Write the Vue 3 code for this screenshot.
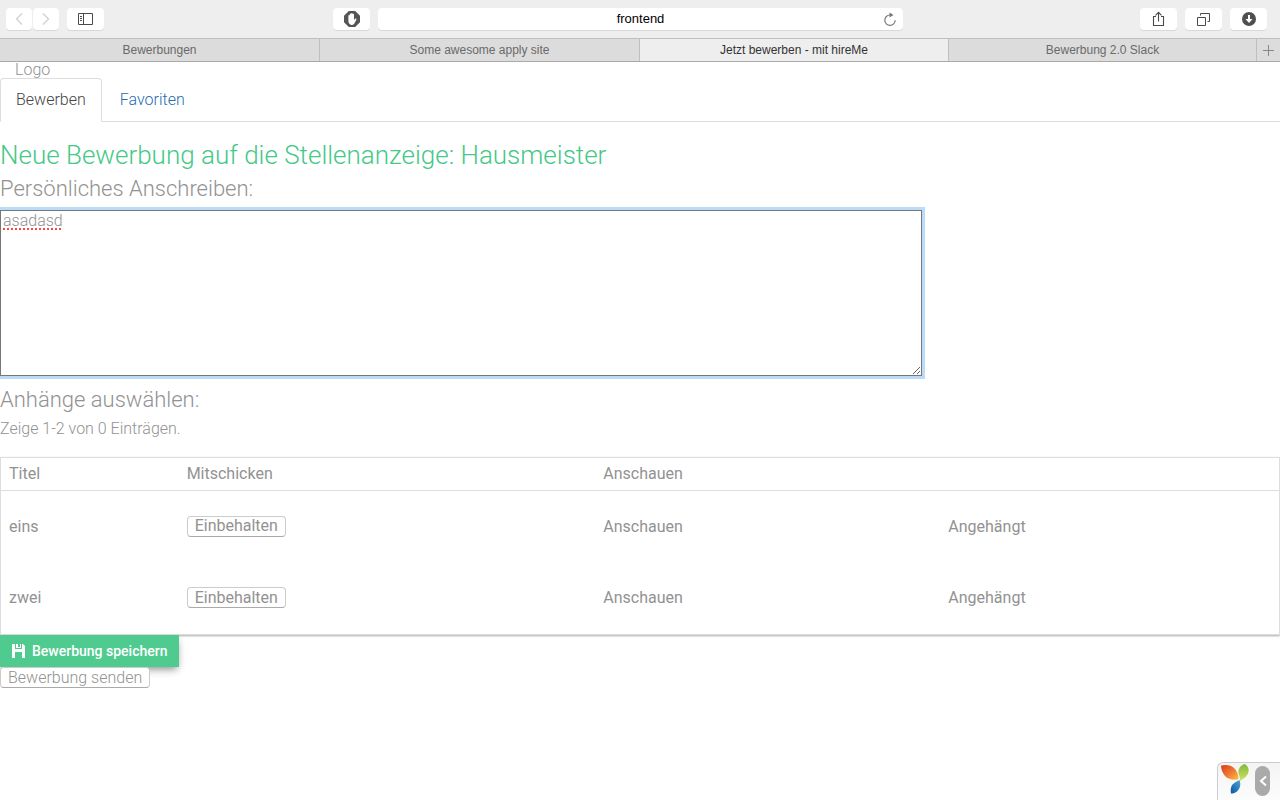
<script setup>
import { ref } from 'vue'

const tabs = [
  { title: 'Bewerbungen' },
  { title: 'Some awesome apply site' },
  { title: 'Jetzt bewerben - mit hireMe', active: true },
  { title: 'Bewerbung 2.0 Slack' },
]
const address = ref('frontend')
const letter = ref('asadasd')
const attachments = ['eins', 'zwei']
</script>

<template>
  <div class="window">
    <header class="toolbar">
      <div class="group left">
        <button class="tool narrow" aria-label="Zurück">
          <svg width="8" height="14" viewBox="0 0 8 14"><path d="M7 1.5L1.5 7L7 12.5" fill="none" stroke="#d2d2d2" stroke-width="1.4" /></svg>
        </button>
        <button class="tool narrow" aria-label="Vorwärts">
          <svg width="8" height="14" viewBox="0 0 8 14"><path d="M1 1.5L6.5 7L1 12.5" fill="none" stroke="#d2d2d2" stroke-width="1.4" /></svg>
        </button>
        <button class="tool sidebar" aria-label="Seitenleiste">
          <svg width="15" height="12" viewBox="0 0 15 12"><path d="M.5.5h14v11H.5zM5.5.5v11M2 3.5h2M2 5.5h2M2 7.5h2" fill="none" stroke="#4a4a4a" /></svg>
        </button>
      </div>
      <div class="group middle">
        <button class="tool" aria-label="Werbeblocker">
          <svg width="16" height="16" viewBox="0 0 16 16">
            <path d="M4.8 0h6.4L16 4.8v6.4L11.2 16H4.8L0 11.2V4.8z" fill="#555" />
            <path d="M4.4 8V4.6q0-.7.7-.7t.7.7V7V3.2q0-.7.7-.7t.7.7V7V2.6q0-.7.7-.7t.7.7V7V3.4q0-.7.7-.7t.7.7v5.8l1-1.4q.6-.7 1.2-.2t.1 1.2l-1.9 3.7q-.8 1.4-2.3 1.400H7.500q-1.500 0-2.300-1.400Q4.400 11.500 4.400 10z" fill="#fff" />
          </svg>
        </button>
        <div class="address">
          <input v-model="address" type="text" aria-label="Adresse" />
          <button class="reload" aria-label="Neu laden">
            <svg width="14" height="15" viewBox="0 0 14 15"><path d="M7 3A5.200 5.200 0 1 0 12.200 8.200" fill="none" stroke="#777" stroke-width="1.200" /><path d="M6.500.5L10.500 3L6.500 5.500z" fill="#777" /></svg>
          </button>
        </div>
      </div>
      <div class="group right">
        <button class="tool" aria-label="Teilen">
          <svg width="13" height="16" viewBox="0 0 13 16"><path d="M4 5.500H1.500v9h10v-9H9M6.500 10.500V1.500M3.500 4.300L6.500 1.300L9.500 4.300" fill="none" stroke="#4a4a4a" stroke-width="1.100" /></svg>
        </button>
        <button class="tool" aria-label="Alle Tabs">
          <svg width="13" height="13" viewBox="0 0 13 13"><path d="M.5 4.500h8v8h-8zM3.500 2.500V.5h9v8h-2" fill="none" stroke="#4a4a4a" /></svg>
        </button>
        <button class="tool" aria-label="Downloads">
          <svg width="14" height="14" viewBox="0 0 14 14"><circle cx="7" cy="7" r="7" fill="#4f4f4f" /><path d="M6 3h2v4h2.500L7 11L3.500 7H6z" fill="#fff" /></svg>
        </button>
      </div>
    </header>

    <nav class="browser-tabs" aria-label="Browser-Tabs">
      <button v-for="t in tabs" :key="t.title" class="browser-tab" :class="{ active: t.active }">{{ t.title }}</button>
      <button class="browser-tab plus" aria-label="Neuer Tab">
        <svg width="11" height="11" viewBox="0 0 11 11"><path d="M5.500 0v11M0 5.500h11" stroke="#888" /></svg>
      </button>
    </nav>

    <main class="page">
      <div class="logo">Logo</div>
      <nav class="page-tabs">
        <a href="#bewerben" class="active">Bewerben</a>
        <a href="#favoriten">Favoriten</a>
      </nav>

      <h1>Neue Bewerbung auf die Stellenanzeige: Hausmeister</h1>
      <label for="letter" class="heading">Persönliches Anschreiben:</label>
      <textarea id="letter" v-model="letter" spellcheck="false"></textarea>

      <h2 class="heading">Anhänge auswählen:</h2>
      <p class="summary">Zeige 1-2 von 0 Einträgen.</p>

      <table>
        <colgroup>
          <col class="c-title" /><col class="c-send" /><col class="c-view" /><col />
        </colgroup>
        <thead>
          <tr><th>Titel</th><th>Mitschicken</th><th>Anschauen</th><th></th></tr>
        </thead>
        <tbody>
          <tr v-for="a in attachments" :key="a">
            <td>{{ a }}</td>
            <td><button class="plain">Einbehalten</button></td>
            <td>Anschauen</td>
            <td>Angehängt</td>
          </tr>
        </tbody>
      </table>

      <div class="actions">
        <button class="save">
          <svg width="13" height="14" viewBox="0 0 13 14"><path d="M0 0h3v5h7V0h1l2 2v12h-3V8H3v6H0zM4 0h2v4H4zM8 0h1v4H6V3h2z" fill="#fff" /></svg>
          Bewerbung speichern
        </button>
        <button class="plain light">Bewerbung senden</button>
      </div>
    </main>

    <aside class="debug">
      <svg width="30" height="31" viewBox="0 0 30 31">
        <defs>
          <linearGradient id="orange" x1="0" y1="0" x2="1" y2="1"><stop offset="0" stop-color="#d83a20" /><stop offset=".55" stop-color="#f07a35" /><stop offset="1" stop-color="#fbc33c" /></linearGradient>
          <linearGradient id="green" x1="0" y1="0" x2="0" y2="1"><stop offset="0" stop-color="#80b93c" /><stop offset="1" stop-color="#d3e264" /></linearGradient>
          <linearGradient id="blue" x1="1" y1="0" x2="0" y2="1"><stop offset="0" stop-color="#49a6dc" /><stop offset="1" stop-color="#0b569f" /></linearGradient>
        </defs>
        <path d="M1 1.500C7 0 12 1.500 15 5C18 8.500 18.500 12 18.500 15.500C13 16 8 15.500 5 12C2.500 9 1 5 1 1.500z" fill="url(#orange)" />
        <path d="M24.500 0C28.500 2 29.500 6 28 9.500C26.500 13 23.500 14.500 20 17C20 14 19.500 12 18.500 9.500C18 5 20 1.500 24.500 0z" fill="url(#green)" />
        <path d="M19.500 16C21 20 20.500 24 17.500 27C15.500 29 13 29.500 11 29.500C10.500 26 10.500 23 12.500 20.500C14.500 18.500 17 17.500 19.500 16z" fill="url(#blue)" />
      </svg>
      <button class="toggle" aria-label="Debug-Leiste öffnen">
        <svg width="8" height="12" viewBox="0 0 8 12"><path d="M7 1.500L2 6L7 10.500" fill="none" stroke="#fff" stroke-width="2" /></svg>
      </button>
    </aside>
  </div>
</template>

<style>
body {
  margin: 0;
  background: #fff;
}
</style>

<style scoped>
* {
  box-sizing: border-box;
}
.window {
  min-height: 100vh;
  color: #929292;
  font: 300 16px/23px Roboto, sans-serif;
}
button {
  font: inherit;
  color: inherit;
  border: 0;
  padding: 0;
}
.toolbar {
  display: flex;
  height: 38px;
  padding: 0 13px 0 6px;
  align-items: center;
  background: #eee;
}
.group {
  display: flex;
  gap: 8px;
  min-width: 0;
}
.left {
  flex: 327 1 0;
  gap: 1px;
}
.middle {
  flex: 570 1 0;
}
.right {
  flex: 364 1 0;
  justify-content: flex-end;
}
.tool {
  display: flex;
  width: 37px;
  height: 22px;
  flex: none;
  align-items: center;
  justify-content: center;
  background: #fff;
  border-radius: 4px;
  box-shadow: 0 1px 0 #d8d8d8;
}
.narrow {
  width: 26px;
}
.sidebar {
  margin-left: 7px;
}
.address {
  display: flex;
  flex: 1;
  height: 22px;
  padding-right: 6px;
  align-items: center;
  background: #fff;
  border-radius: 4px;
  box-shadow: 0 1px 0 #d8d8d8;
}
.address input {
  flex: 1;
  min-width: 0;
  padding: 0 0 0 20px;
  border: 0;
  outline: 0;
  background: none;
  color: #000;
  font: 13px/20px "Liberation Sans", Arial, sans-serif;
  text-align: center;
}
.reload {
  display: flex;
  background: none;
}
.browser-tabs {
  display: grid;
  grid-template-columns: 320fr 320fr 309fr 308fr 23px;
  height: 24px;
  border-top: 1px solid #bfbfbf;
  border-bottom: 1px solid #aaa;
}
.browser-tab {
  background: #dcdcdc;
  border-right: 1px solid #bfbfbf;
  color: #6a6a6a;
  font: 12px/20px "Liberation Sans", Arial, sans-serif;
}
.browser-tab.active {
  background: #eee;
  color: #333;
}
.plus {
  display: flex;
  align-items: center;
  justify-content: center;
  border-right: 0;
}
.logo {
  padding-left: 15px;
  line-height: 16px;
}
.page-tabs {
  display: flex;
  gap: 2px;
  border-bottom: 1px solid #ddd;
}
.page-tabs a {
  margin-bottom: -1px;
  padding: 9px 15px 10px;
  border: 1px solid transparent;
  border-radius: 4px 4px 0 0;
  color: #1f6cb0;
  text-decoration: none;
}
.page-tabs .active {
  background: #fff;
  border-color: #ddd #ddd #fff;
  color: #444;
}
h1 {
  margin: 16px 0 1px;
  color: #45c888;
  font-size: 26px;
  font-weight: 300;
  line-height: 34px;
}
.heading {
  display: block;
  margin: 0;
  font-size: 22px;
  font-weight: 300;
  line-height: 32px;
}
textarea {
  display: block;
  width: 72%;
  height: 166px;
  margin: 5px 0 8px;
  padding: 0 2px;
  border: 1px solid #777;
  border-radius: 0;
  outline: 3px solid #bbdcf8;
  color: inherit;
  font: inherit;
  line-height: 20px;
  text-decoration: underline dotted #f44 2px;
  text-underline-offset: 2px;
}
.summary {
  margin: 1px 0 17px;
}
table {
  width: 100%;
  table-layout: fixed;
  border-collapse: separate;
  border-spacing: 0;
  border: 1px solid #ddd;
  box-shadow: 0 1px 2px #aaa;
  font-weight: 400;
}
.c-title {
  width: 13.9%;
}
.c-send {
  width: 32.6%;
}
.c-view {
  width: 27%;
}
th,
td {
  padding: 0 8px 2px;
  text-align: left;
  font-weight: 400;
}
th {
  height: 33px;
  border-bottom: 1px solid #ddd;
}
td {
  height: 72px;
}
tbody tr:last-child td {
  height: 71px;
}
.plain {
  display: block;
  height: 21px;
  padding: 0 7px;
  background: #fff;
  border: 1px solid #ccc;
  border-bottom-color: #aaa;
  border-radius: 4px;
  line-height: 18px;
}
.light {
  font-weight: 300;
}
.save {
  display: flex;
  height: 32px;
  padding: 0 11px 0 12px;
  gap: 7px;
  align-items: center;
  position: relative;
  background: #4fcb8f;
  color: #fff;
  font-size: 14px;
  font-weight: 500;
  box-shadow: 0 4px 8px -2px #888;
}
.actions .plain {
  position: relative;
}
.debug {
  position: fixed;
  right: 0;
  bottom: 0;
  display: flex;
  width: 63px;
  height: 38px;
  padding: 1px 0 0 2px;
  gap: 5px;
  background: linear-gradient(#f4f4f4, #fcfcfc);
  border: solid #ccc;
  border-width: 1px 0 0 1px;
  border-radius: 6px 0 0;
}
.toggle {
  display: flex;
  width: 15px;
  height: 30px;
  margin-top: 2px;
  align-items: center;
  justify-content: center;
  background: #aaa;
  border-radius: 8px;
}
</style>
